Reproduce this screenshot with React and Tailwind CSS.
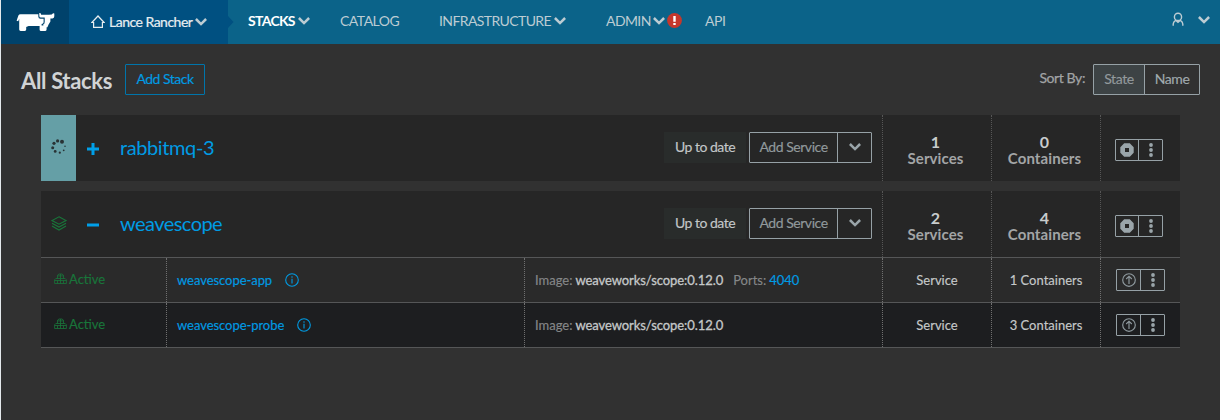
import React from 'react';

function Chevron({ className = '' }) {
  return (
    <svg className={`block shrink-0 ${className}`} width="12" height="8" viewBox="0 0 12 8" fill="none" stroke="currentColor" strokeWidth="2.5">
      <path d="M0.9 1 L6 6.1 L11.1 1" />
    </svg>
  );
}

function Logo() {
  return (
    <svg width="40" height="20" viewBox="0 0 40 20" fill="#fff" className="block">
      <path d="M4.5 2.2 H22.3 V4.6 Q22.3 6.8 24.5 6.8 H27.6 V10.2 Q27.6 12 25.6 12 V13.6 H30.6 V17.4 Q30.4 18.9 29 18.9 H24.6 Q23.6 18.9 23.6 17.8 V14 H12.6 L10.2 15 V17.6 Q10.2 18.9 8.8 18.9 H4.6 Q3.2 18.9 3.2 17.6 V6.8 L2.2 9.2 L0.6 8.7 L2.4 3.5 Q3 2.2 4.5 2.2 Z" />
      <path d="M23.3 1 H24.4 L25.2 2.8 H33 Q36.4 2.8 37.1 1.2 L38.3 1.4 V4.2 Q38.3 6.2 36.5 6.4 H34.4 V9.6 L32.6 12.4 L31.4 15.2 H28.2 L27 12.8 Q28.7 12 28.7 10 V5.6 H24.8 Q23.3 5.6 23.3 4 Z" />
    </svg>
  );
}

function Home() {
  return (
    <svg width="14" height="14" viewBox="0 0 14 14" fill="none" stroke="currentColor" strokeWidth="1.2" className="block">
      <path d="M0.9 7.5 L7 1 L13.1 7.5 H11.4 V12.4 H2.6 V7.5 Z" />
    </svg>
  );
}

function User() {
  return (
    <svg width="12" height="15" viewBox="0 0 12 15" fill="none" stroke="currentColor" strokeWidth="1.4" className="block">
      <circle cx="6" cy="4.9" r="3.6" />
      <path d="M1.2 13.8 V12 Q1.2 9.8 3.6 8.3 L6 10.3 L8.4 8.3 Q10.8 9.8 10.8 12 V13.8" />
    </svg>
  );
}

function Spinner() {
  return (
    <svg width="16" height="16" viewBox="0 0 16 16" fill="#293335" className="block">
      <circle cx="11" cy="2.8" r="2" />
      <circle cx="6.6" cy="1.9" r="1.6" />
      <circle cx="3" cy="4.3" r="1.6" />
      <circle cx="1.7" cy="8.7" r="1.5" />
      <circle cx="4.2" cy="12.4" r="1.4" />
      <circle cx="8.8" cy="13.7" r="1.1" />
      <circle cx="12.7" cy="11.3" r="0.9" />
      <circle cx="14" cy="7.2" r="0.8" />
    </svg>
  );
}

function Layers() {
  return (
    <svg width="16" height="15" viewBox="0 0 16 15" fill="none" stroke="#19753a" strokeWidth="1.15" className="block">
      <path d="M8 0.8 L15 4.6 L8 8.2 L1 4.6 Z" />
      <path d="M1 7.3 L8 11.1 L15 7.3 M1 10 L8 14 L15 10" />
    </svg>
  );
}

function Boxes() {
  return (
    <svg width="13" height="12" viewBox="0 0 13 12" fill="none" stroke="#19753a" strokeWidth="0.8" className="block">
      <path d="M3.5 5.5 V2.2 L5 1 H8 L9.5 2.2 V5.5 M3.5 2.9 H9.5 M6.5 1 V5.5 M0.6 6.8 L1.8 5.5 H11.2 L12.4 6.8 V10.5 H0.6 Z M0.6 7.5 H12.4 M6.5 5.5 V10.5 M3.5 7.5 V10.5 M9.5 7.5 V10.5" />
    </svg>
  );
}

function Info() {
  return (
    <svg width="14" height="14" viewBox="0 0 14 14" fill="none" stroke="#009be3" strokeWidth="1.1" className="block">
      <circle cx="7" cy="7" r="6.3" />
      <path d="M7 5.8 V10.6 M7 3.3 V4.7" />
    </svg>
  );
}

function Stop() {
  return (
    <svg width="14" height="14" viewBox="0 0 14 14" fill="#9aa5aa" className="block">
      <path fillRule="evenodd" d="M4.2 0.3 H9.8 L13.7 4.2 V9.8 L9.8 13.7 H4.2 L0.3 9.8 V4.2 Z M5 5 V9 H9 V5 Z" />
    </svg>
  );
}

function Up() {
  return (
    <svg width="14" height="14" viewBox="0 0 14 14" fill="none" stroke="#8f9a9f" strokeWidth="1.15" className="block">
      <circle cx="7" cy="7" r="6.3" />
      <path d="M7 11 V3.2 M4.2 6 L7 3.2 L9.8 6" />
    </svg>
  );
}

function Dots() {
  return (
    <svg width="4" height="14" viewBox="0 0 4 14" fill="#9aa5aa" className="block">
      <circle cx="2" cy="2" r="1.9" />
      <circle cx="2" cy="7" r="1.9" />
      <circle cx="2" cy="12" r="1.9" />
    </svg>
  );
}

function Actions({ icon, wide }) {
  return (
    <div className={`flex h-[22px] rounded-[1px] border border-[#96a1a6] ${wide ? 'w-[49px]' : 'w-[48px]'}`}>
      <div className={`flex items-center justify-center border-r border-[#96a1a6] ${wide ? 'w-[24px]' : 'w-[23px]'}`}>{icon}</div>
      <div className="flex flex-1 items-center justify-center"><Dots /></div>
    </div>
  );
}

function Count({ n, label }) {
  return (
    <div className="flex w-[109px] flex-col items-center border-l border-dotted border-[#565656] pr-[3px] pt-[19px] font-bold leading-4">
      <span className="text-base leading-4 text-[#c8cccd]">{n}</span>
      <span className="text-[15px] leading-4 tracking-[0.1px] text-[#a3a5a6]">{label}</span>
    </div>
  );
}

function Stack({ name, status, open, services, containers }) {
  return (
    <div className="flex h-[66px] bg-[#262626]">
      <div className={`flex w-[35px] items-center justify-center pb-[2px] ${open ? '' : 'bg-[#659fa6]'}`}>
        {status}
      </div>
      <div className="flex w-[44px] items-center pl-[11px] pt-px">
        <svg width="12" height="12" viewBox="0 0 12 12" fill="#009fe8" className="block">
          <path d={open ? 'M0 4.5 H12 V7.5 H0 Z' : 'M0 4.5 H4.5 V0 H7.5 V4.5 H12 V7.5 H7.5 V12 H4.5 V7.5 H0 Z'} />
        </svg>
      </div>
      <div className={`flex-1 text-[20px] leading-[64px] text-[#009be3] ${open ? 'tracking-[-0.55px]' : 'tracking-[-0.4px]'}`}>{name}</div>
      <div className="mt-[17px] flex h-[31px] w-[82px] items-center justify-center bg-[#292c2b] pb-px text-sm tracking-[-0.5px] text-[#c3c7c8] [-webkit-text-stroke:0.15px]">Up to date</div>
      <div className="ml-[3px] mr-[10px] mt-[17px] flex h-[31px] w-[123px] rounded-[1px] border border-[#96a1a6]">
        <div className="flex w-[88px] items-center justify-center border-r border-[#96a1a6] pb-px text-sm tracking-[-0.45px] text-[#91999c] [-webkit-text-stroke:0.15px]">Add Service</div>
        <div className="flex flex-1 items-center justify-center pb-[2px] text-[#9aa5aa]"><Chevron /></div>
      </div>
      <Count n={services} label="Services" />
      <Count n={containers} label="Containers" />
      <div className="flex w-[80px] border-l border-dotted border-[#565656] pl-[14px] pt-6">
        <Actions icon={<Stop />} />
      </div>
    </div>
  );
}

function Service({ name, count, port, dark }) {
  return (
    <div className={`flex h-[45px] border-t border-[#555657] text-[13px] leading-[44px] text-[#c5c8c9] [-webkit-text-stroke:0.15px] ${dark ? 'bg-[#1d1e20]' : 'bg-[#2a2a2a]'}`}>
      <div className="flex w-[125px] items-center gap-[2px] pb-[2px] pl-[13px] text-[#19753a]">
        <Boxes /><span>Active</span>
      </div>
      <div className="flex w-[358px] items-center gap-[13px] border-l border-dotted border-[#707070] pl-[10px] text-[#009be3]">
        <span className="tracking-[-0.05px]">{name}</span><Info />
      </div>
      <div className="flex w-[358px] border-l border-dotted border-[#707070] pl-[10px]">
        <span className="mr-[3px] text-[#858788]">Image:</span>
        <span className="tracking-[-0.07px] [-webkit-text-stroke:0.3px]">weaveworks/scope:0.12.0</span>
        {port && <span className="ml-[10px] mr-[3px] text-[#858788]">Ports:</span>}
        {port && <span className="text-[#009be3]">{port}</span>}
      </div>
      <div className="w-[109px] border-l border-dotted border-[#707070] text-center">Service</div>
      <div className="w-[109px] border-l border-dotted border-[#707070] text-center">{count} Containers</div>
      <div className="flex w-[80px] items-center border-l border-dotted border-[#707070] pl-[15px]">
        <Actions icon={<Up />} wide />
      </div>
    </div>
  );
}

export default function App() {
  return (
    <div className="h-[420px] w-[1220px] overflow-hidden whitespace-nowrap border-l border-[#e4e9ec] bg-[#313131] font-['Lato',sans-serif]">
      <header className="flex h-11 bg-[#0b6389] text-sm text-[#bdccd3]">
        <div className="w-[68px] bg-[#00426b] pl-[15px] pt-3"><Logo /></div>
        <div className="flex w-[159px] items-center bg-[#005081] pl-[22px] text-[#e8eef1]">
          <Home /><span className="ml-1 w-[84px] tracking-[-0.5px] [-webkit-text-stroke:0.2px]">Lance Rancher</span><Chevron className="ml-[2px] text-[#bdccd3]" />
        </div>
        <svg width="6" height="44" viewBox="0 0 6 44" fill="#005081" className="block"><path d="M0 16 L5.5 22 L0 28 Z" /></svg>
        <nav className="flex flex-1 items-center pb-[2px] pl-[14px] tracking-[-0.6px]">
          <div className="flex w-[92px] items-center"><b className="w-[50px] tracking-[-0.7px] text-white">STACKS</b><Chevron /></div>
          <div className="w-[99px] tracking-[-0.5px]">CATALOG</div>
          <div className="flex w-[167px] items-center"><span className="w-[115px]">INFRASTRUCTURE</span><Chevron /></div>
          <div className="flex w-[99px] items-center">
            <span className="w-[47px]">ADMIN</span><Chevron />
            <svg width="15" height="15" viewBox="0 0 15 15" className="mb-[2px] ml-[2px] block">
              <circle cx="7.5" cy="7.5" r="7.4" fill="#c5372c" />
              <path d="M6.3 3 H8.7 V8.8 H6.3 Z M6.3 10 H8.7 V12 H6.3 Z" fill="#fff" />
            </svg>
          </div>
          <div className="tracking-[-0.4px]">API</div>
        </nav>
        <div className="flex items-center gap-[14px] pb-[5px] pr-[10px]"><User /><Chevron /></div>
      </header>
      <div className="flex h-[71px] items-start pl-5 pr-5 pt-5">
        <h1 className="w-[104px] text-[22px] font-bold leading-[33px] tracking-[-0.35px] text-[#d0d3d4]">All Stacks</h1>
        <div className="flex h-[31px] w-[80px] items-center justify-center rounded-[1px] border border-[#0075ab] pb-px text-sm tracking-[-0.5px] text-[#009be3] [-webkit-text-stroke:0.15px]">Add Stack</div>
        <div className="ml-auto mr-2 text-sm leading-[28px] tracking-[-0.4px] text-[#a2a4a5] [-webkit-text-stroke:0.25px]">Sort By:</div>
        <div className="flex h-[31px] w-[107px] rounded-[1px] border border-[#96a1a6] text-sm tracking-[-0.4px] text-[#a0aaad] [-webkit-text-stroke:0.15px]">
          <div className="flex w-[51px] items-center justify-center border-r border-[#96a1a6] bg-[#3d4345] pb-px text-[#939a9d]">State</div>
          <div className="flex flex-1 items-center justify-center pb-px">Name</div>
        </div>
      </div>
      <main className="ml-10 w-[1139px]">
        <Stack name="rabbitmq-3" status={<Spinner />} services="1" containers="0" />
        <div className="h-[10px]" />
        <Stack name="weavescope" status={<Layers />} open services="2" containers="4" />
        <Service name="weavescope-app" count="1" port="4040" />
        <Service name="weavescope-probe" count="3" dark />
        <div className="h-px bg-[#555657]" />
      </main>
    </div>
  );
}
